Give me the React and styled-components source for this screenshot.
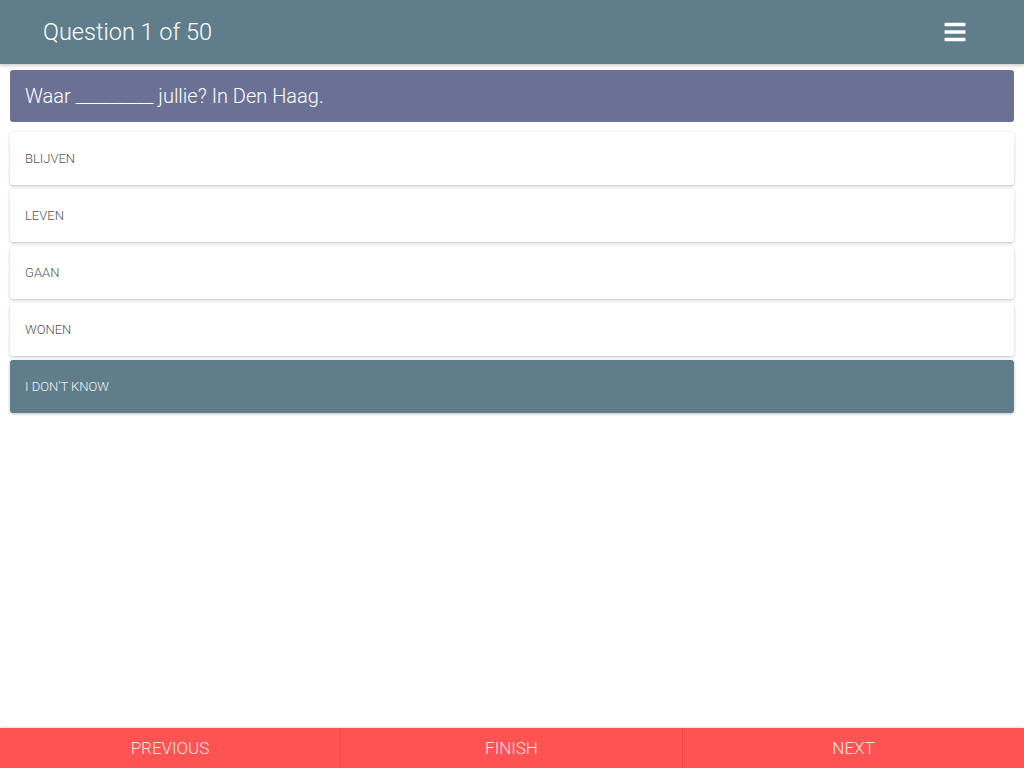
import styled, { createGlobalStyle } from "styled-components";
import { FaBars } from "react-icons/fa";

const options = ["Blijven", "Leven", "Gaan", "Wonen"];

export default function App() {
  return (
    <>
      <GlobalStyle />
      <Page>
        <Header>
          <Title>Question 1 of 50</Title>
          <MenuButton>
            <FaBars />
          </MenuButton>
        </Header>

        <Content>
          <QuestionBar>Waar _________ jullie? In Den Haag.</QuestionBar>
          <OptionList>
            {options.map((o) => (
              <Option key={o}>{o}</Option>
            ))}
            <Option $muted>I don't know</Option>
          </OptionList>
        </Content>

        <Footer>
          <FooterButton>Previous</FooterButton>
          <FooterButton>Finish</FooterButton>
          <FooterButton>Next</FooterButton>
        </Footer>
      </Page>
    </>
  );
}

const GlobalStyle = createGlobalStyle`
  html, body {
    margin: 0;
    padding: 0;
    background: #ffffff;
    font-family: Roboto, "Liberation Sans", sans-serif;
  }
  * { box-sizing: border-box; }
`;

const Page = styled.div`
  height: 768px;
  display: flex;
  flex-direction: column;
`;

const Header = styled.header`
  height: 64px;
  flex-shrink: 0;
  background: #607d8b;
  display: flex;
  align-items: center;
  justify-content: space-between;
  padding: 0 57px 0 43px;
  box-shadow: 0 2px 3px rgba(0, 0, 0, 0.18);
`;

const Title = styled.h1`
  margin: 0;
  font-size: 23.5px;
  font-weight: 300;
  color: #ffffff;
`;

const MenuButton = styled.div`
  color: #ffffff;
  font-size: 24px;
  display: flex;
  align-items: center;
`;

const Content = styled.main`
  flex: 1;
  padding: 6px 10px 0;
  display: flex;
  flex-direction: column;
  gap: 10px;
`;

const QuestionBar = styled.div`
  height: 52px;
  background: #6b7194;
  border-radius: 3px;
  color: #ffffff;
  font-size: 20px;
  font-weight: 300;
  display: flex;
  align-items: center;
  padding: 0 15px;
`;

const OptionList = styled.div`
  display: flex;
  flex-direction: column;
  gap: 4px;
`;

const Option = styled.div`
  height: 53px;
  border-radius: 3px;
  display: flex;
  align-items: center;
  padding: 0 15px;
  font-size: 13px;
  font-weight: 300;
  text-transform: uppercase;
  background: ${(p) => (p.$muted ? "#607d8b" : "#ffffff")};
  color: ${(p) => (p.$muted ? "#eef2f4" : "#555555")};
  box-shadow: 0 1px 3px rgba(0, 0, 0, 0.25);
`;

const Footer = styled.footer`
  height: 40px;
  flex-shrink: 0;
  display: grid;
  grid-template-columns: 340px 342px 1fr;
  background: #ff5252;
  box-shadow: 0 -1px 2px rgba(0, 0, 0, 0.12);
`;

const FooterButton = styled.div`
  display: flex;
  align-items: center;
  justify-content: center;
  color: #ffe6e6;
  font-size: 17px;
  font-weight: 300;
  text-transform: uppercase;
  & + & {
    border-left: 1px solid #e84848;
  }
`;
